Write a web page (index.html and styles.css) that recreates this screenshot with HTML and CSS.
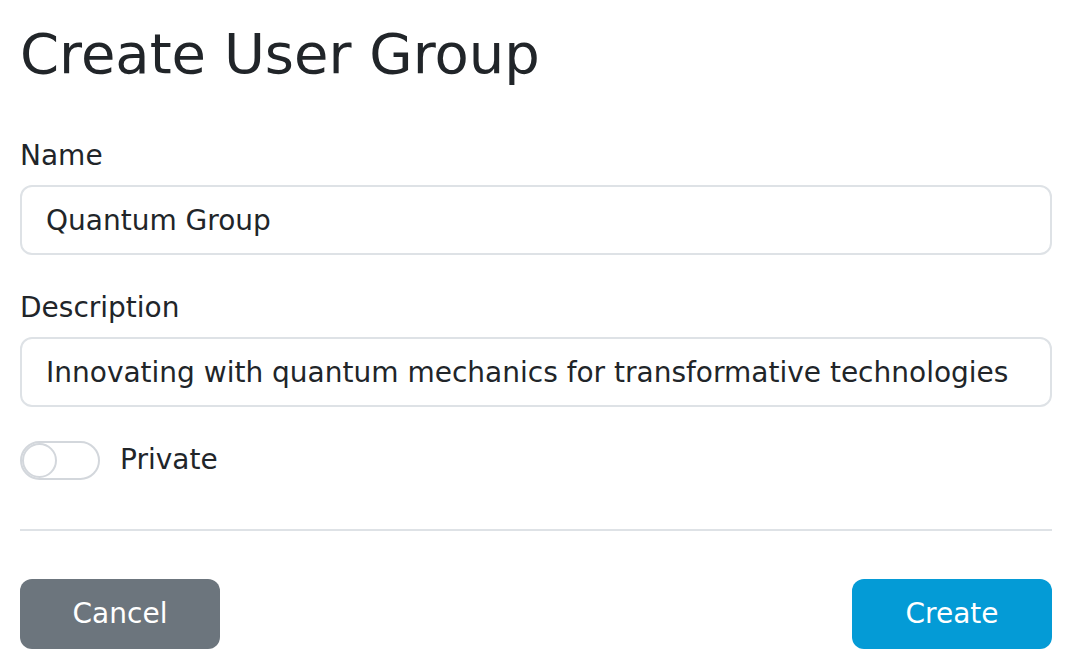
FILE: index.html
```html
<!DOCTYPE html>
<html lang="en">
<head>
<meta charset="utf-8">
<title>Create User Group</title>
<link rel="stylesheet" href="styles.css">
</head>
<body>
<main class="page">
  <h1 class="title">Create User Group</h1>
  <form class="form">
    <div class="field">
      <label class="label" for="name">Name</label>
      <input class="input" id="name" type="text" value="Quantum Group">
    </div>
    <div class="field">
      <label class="label" for="desc">Description</label>
      <input class="input" id="desc" type="text" value="Innovating with quantum mechanics for transformative technologies">
    </div>
    <div class="switch-row">
      <span class="switch"><span class="knob"></span></span>
      <span class="switch-label">Private</span>
    </div>
    <hr class="divider">
    <div class="actions">
      <button type="button" class="btn btn-cancel">Cancel</button>
      <button type="button" class="btn btn-create">Create</button>
    </div>
  </form>
</main>
</body>
</html>
```

FILE: styles.css
```css
* { box-sizing: border-box; }
html, body { margin: 0; padding: 0; background: #fff; }
body {
  font-family: "DejaVu Sans", "Liberation Sans", sans-serif;
  font-size: 28px;
  line-height: 1.5;
  color: #212529;
}
.page { padding: 20px; }
.title {
  margin: 0 0 48px 0;
  font-size: 56px;
  font-weight: 400;
  line-height: 1.2;
  color: #212529;
}
.form { display: flex; flex-direction: column; }
.field { display: flex; flex-direction: column; margin-bottom: 32px; }
.field + .field { margin-bottom: 33px; }
.label { display: block; margin-bottom: 8px; }
.input {
  display: block;
  width: 100%;
  height: 70px;
  padding: 0 24px;
  font: inherit;
  color: #212529;
  background: #fff;
  border: 2px solid #dee2e6;
  border-radius: 12px;
  outline: none;
}
.switch-row { display: flex; align-items: center; gap: 20px; height: 40px; }
.switch {
  display: flex;
  align-items: center;
  width: 80px;
  height: 39px;
  border: 2px solid #d3d7dc;
  border-radius: 20px;
  padding: 0;
}
.knob {
  width: 35px;
  height: 35px;
  border: 2px solid #d3d7dc;
  border-radius: 50%;
  background: #fff;
}
.divider {
  margin: 49px 0 48px 0;
  border: 0;
  border-top: 2px solid #dee2e6;
  height: 0;
}
.actions { display: flex; justify-content: space-between; }
.btn {
  width: 200px;
  height: 70px;
  border: 0;
  border-radius: 12px;
  font: inherit;
  color: #fff;
  padding: 0;
}
.btn-cancel { background: #6c757d; }
.btn-create { background: #049bd6; }
```
